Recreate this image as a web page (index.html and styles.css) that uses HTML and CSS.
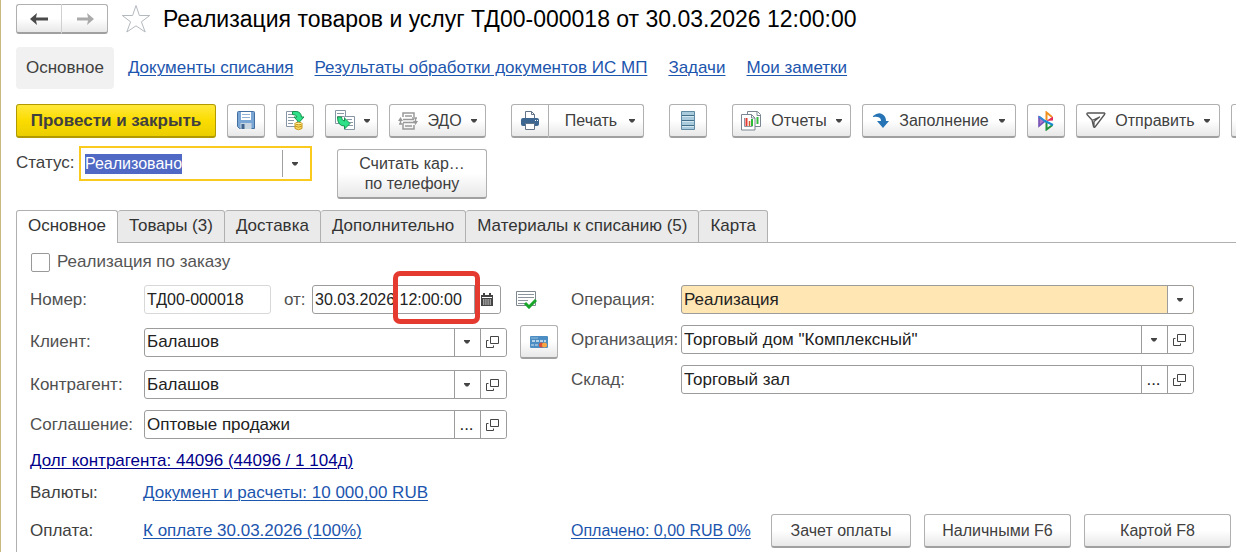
FILE: index.html
```html
<!DOCTYPE html>
<html lang="ru">
<head>
<meta charset="utf-8">
<title>Реализация товаров и услуг</title>
<link rel="stylesheet" href="styles.css">
</head>
<body>
<svg class="defs" aria-hidden="true">
  <symbol id="open" viewBox="0 0 13 12"><path d="M4.500.5h8v7h-8zM2.500 4.500h-2v7h7v-2" fill="none" stroke="#444"/></symbol>
  <symbol id="caret" viewBox="0 0 6 4"><path d="M0 0h6v1L4 3.500H2L0 1z" fill="#444"/></symbol>
</svg>
<main class="form">
  <header class="head">
    <div class="history">
      <button type="button" class="btn" aria-label="Назад"><svg width="18" height="14" viewBox="0 0 18 14"><path d="M0 7l7-6-1 4.500h12v3H6L7 13z" fill="#4a4a4a"/></svg></button>
      <button type="button" class="btn" aria-label="Вперед"><svg width="18" height="14" viewBox="0 0 18 14"><path d="M18 7l-7-6 1 4.500H1v3h11L11 13z" fill="#aaa"/></svg></button>
    </div>
    <svg class="star" width="30" height="30" viewBox="0 0 30 30"><path d="M15 1.500l3.400 10h10.300l-8.300 6.300 3.800 10.200-9.200-6.200L5.800 28l3.800-10.200-8.300-6.300h10.300z" fill="#fff" stroke="#b4b9be"/></svg>
    <h1>Реализация товаров и услуг ТД00-000018 от 30.03.2026 12:00:00</h1>
  </header>

  <nav class="nav">
    <span class="current">Основное</span>
    <a href="#">Документы списания</a>
    <a href="#">Результаты обработки документов ИС МП</a>
    <a href="#">Задачи</a>
    <a href="#">Мои заметки</a>
  </nav>

  <div class="toolbar">
    <button type="button" class="btn primary">Провести и закрыть</button>
    <button type="button" class="btn square" aria-label="Записать"><svg width="18" height="19" viewBox="0 0 18 19"><path d="M.5 1.500a1 1 0 0 1 1-1h15a1 1 0 0 1 1 1v16h-15l-2-2z" fill="#7aa6d6" stroke="#456f9f"/><path d="M4 1h10v8H4z" fill="#fff"/><path d="M5 3.500h8M5 6.500h8" stroke="#8fb2d6"/><path d="M3.500 12h11v6h-11z" fill="#c9d5e0"/><path d="M4.500 13h3v5h-3z" fill="#3f648f"/></svg></button>
    <button type="button" class="btn square" aria-label="Провести"><svg width="20" height="21" viewBox="0 0 20 21"><path d="M1.500 1.500h11v15h-11z" fill="#fff" stroke="#8796a6"/><path d="M3 4.500h6M3 7.500h6M3 10.500h6M3 13.500h5" stroke="#8b98a6"/><path d="M7.500 1.500h4q4.500.5 5 5.500h2.500l-5 5.500-5-5.500h3q-.5-2.500-4.500-2.500z" fill="#2ee088" stroke="#14934c"/><path d="M10 13.500v5q3.500 2.500 7 0v-5z" fill="#fad75e" stroke="#c79a20"/><ellipse cx="13.500" cy="13.500" rx="3.500" ry="1.200" fill="#fff0a0" stroke="#c79a20"/><path d="M10 16q3.500 2.300 7 0" fill="none" stroke="#c79a20"/></svg></button>
    <button type="button" class="btn split" aria-label="Создать на основании"><svg width="21" height="21" viewBox="0 0 21 21"><path d="M1.500.5h10v13h-10z" fill="#fff" stroke="#8796a6"/><path d="M3 3.500h7M3 6.500h7" stroke="#8b98a6"/><path d="M10.500 6.500h10v13h-10z" fill="#fff" stroke="#8796a6"/><path d="M13 9.500h5M15 12.500h4M14 15.500h5" stroke="#8b98a6"/><path d="M3.500 7h4q0 3.500 3 4V8l5.500 5.500-5.500 5.500v-3q-7 0-7-9z" fill="#2ee088" stroke="#14934c"/></svg><svg class="caret"><use href="#caret"/></svg></button>
    <button type="button" class="btn edo"><svg width="20" height="20" viewBox="0 0 20 20"><g fill="none" stroke="#999" stroke-width="1.500"><path d="M5 6V2h11v4M5 14v4h11v-4M5 8.500h11M5 11.500h11M7 5h7M7 15h7"/><path d="M1 13h5M2.500 13V8M14 7h5M17.500 7v5"/></g><path d="M0 10l2.500-4L5 10zM15 10h5l-2.500 4z" fill="#999"/></svg><span>ЭДО</span><svg class="caret"><use href="#caret"/></svg></button>
    <div class="joined">
      <button type="button" class="btn square" aria-label="Печать сразу"><svg width="18" height="19" viewBox="0 0 18 19"><path d="M4.500 8V.5h6l3 3V8" fill="#fff" stroke="#61748a"/><path d="M10.500.5v3h3" fill="none" stroke="#61748a"/><rect y="7" width="18" height="8" rx="2" fill="#3d6791"/><path d="M14 9.500h1M16 9.500h1" stroke="#fff"/><path d="M4.500 12.500h9v6h-9z" fill="#fff" stroke="#61748a"/></svg></button>
      <button type="button" class="btn print"><span>Печать</span><svg class="caret"><use href="#caret"/></svg></button>
    </div>
    <button type="button" class="btn square apart" aria-label="Список"><svg width="14" height="19" viewBox="0 0 14 19"><path d="M.5.5h13v18H.5z" fill="#a9cbdc" stroke="#5f8ba4"/><path d="M1 4.500h12M1 9.500h12M1 14.500h12" stroke="#416e89"/><path d="M1 5.500h12M1 10.500h12M1 15.500h12" stroke="#d5e8f1"/></svg></button>
    <button type="button" class="btn reports apart"><svg width="21" height="20" viewBox="0 0 21 20"><path d="M6.500.5h10l3 3v12h-13z" fill="#fff" stroke="#7a8792"/><path d="M16 1v3.500h3.500" fill="none" stroke="#7a8792"/><path d="M16.500 6v7" stroke="#35bb41" stroke-width="2"/><path d="M.5 3.500h10l3.500 3.500v12H.5z" fill="#fff" stroke="#7a8792"/><path d="M10.500 3.500V7H14" fill="none" stroke="#7a8792"/><path d="M3.500 7v8.500h8" fill="none" stroke="#8c98a1"/><path d="M5.500 7v8" stroke="#e43b35" stroke-width="2"/><path d="M8.500 10v5" stroke="#cf5a2d" stroke-width="1.500"/><path d="M11 8v7" stroke="#2cba39" stroke-width="2"/></svg><span>Отчеты</span><svg class="caret"><use href="#caret"/></svg></button>
    <button type="button" class="btn fill"><svg width="16" height="15" viewBox="0 0 16 15"><path d="M0 3Q5-1 9 1q4 2 4 7h3l-6 7-6-7h4Q8 3 0 4z" fill="#2674b5"/></svg><span>Заполнение</span><svg class="caret"><use href="#caret"/></svg></button>
    <button type="button" class="btn square" aria-label="Сервисы"><svg width="16" height="20" viewBox="0 0 16 20"><path d="M1 6v9l6-5z" fill="#b07acb" stroke="#7552b5" stroke-width="1.600"/><path d="M1 5.500l6.500 5" stroke="#2d8cd8" stroke-width="2"/><path d="M8.500 9V1.500L14 6" fill="none" stroke="#f09023" stroke-width="2"/><path d="M8 10l7-4.500v4z" fill="#e42c58"/><path d="M8.500 11v7.500l6-4.500" fill="none" stroke="#24913d" stroke-width="2"/><path d="M7 10l8 4" stroke="#168bd2" stroke-width="2"/></svg></button>
    <button type="button" class="btn send"><svg width="20" height="17" viewBox="0 0 20 17"><path d="M2 1h16q1.500 0 .5 1.500L9 15q-1 1-1.500-.5L6 8 1 2.500Q.5 1 2 1zM6 8.500L13.500 5 8 9.500v5" fill="none" stroke="#555" stroke-width="1.300" stroke-linejoin="round"/></svg><span>Отправить</span><svg class="caret"><use href="#caret"/></svg></button>
    <button type="button" class="btn square" aria-label="Еще"></button>
  </div>

  <div class="status">
    <label for="status">Статус:</label>
    <div class="statusbox">
      <input id="status" value="Реализовано" size="10">
      <button type="button" aria-label="Выбрать"><svg class="caret"><use href="#caret"/></svg></button>
    </div>
    <button type="button" class="btn card">Считать кар…<br>по телефону</button>
  </div>

  <div class="tabs" role="tablist">
    <button type="button" role="tab" aria-selected="true" class="tab active">Основное</button>
    <button type="button" role="tab" class="tab">Товары (3)</button>
    <button type="button" role="tab" class="tab">Доставка</button>
    <button type="button" role="tab" class="tab">Дополнительно</button>
    <button type="button" role="tab" class="tab">Материалы к списанию (5)</button>
    <button type="button" role="tab" class="tab">Карта</button>
  </div>

  <section class="panel">
    <label class="check"><input type="checkbox">Реализация по заказу</label>
    <div class="columns">
      <div class="left">
        <div class="row">
          <label for="number">Номер:</label>
          <div class="field muted"><input id="number" value="ТД00-000018"></div>
          <label for="date" class="from">от:</label>
          <div class="field date"><input id="date" value="30.03.2026 12:00:00">
            <button type="button" aria-label="Календарь"><svg width="12" height="13" viewBox="0 0 12 13"><path d="M0 2h12v11H0z" fill="#444"/><path d="M3 0v3M9 0v3" stroke="#444" stroke-width="2"/><path d="M1 4.500h10" stroke="#fff"/><path d="M2 7h8M2 9h8M2 11h8" stroke="#fff" stroke-width="1.200" stroke-dasharray="1.400 .8"/></svg></button>
            <span class="mark"></span>
          </div>
          <svg class="posted" width="21" height="18" viewBox="0 0 21 18"><path d="M.5.5h19v14H.5z" fill="#fff" stroke="#7d8790"/><path d="M2 3.500h16M2 6.500h16M2 9.500h10M2 12.500h8" stroke="#8b949c"/><path d="M9 12l4 4 7-7" fill="none" stroke="#18a52a" stroke-width="3"/></svg>
        </div>
        <div class="row client">
          <label for="client">Клиент:</label>
          <div class="field wide"><input id="client" value="Балашов"><button type="button" aria-label="Выбрать"><svg class="caret"><use href="#caret"/></svg></button><button type="button" aria-label="Открыть"><svg class="open"><use href="#open"/></svg></button></div>
          <button type="button" class="btn square bankcard" aria-label="Карта"><svg width="18" height="12" viewBox="0 0 18 12"><rect width="18" height="12" rx="1" fill="#4c8ec3"/><path d="M1 2h7" stroke="#91bddf"/><path d="M2 5h14" stroke="#dcebf5" stroke-width="1.500" stroke-dasharray="3 1"/><path d="M1 9h7" stroke="#d6e5ef" stroke-dasharray="3 1"/><circle cx="11.500" cy="9" r="2.500" fill="#df4f36"/><circle cx="14.500" cy="9" r="2.500" fill="#f6a642"/></svg></button>
        </div>
        <div class="row">
          <label for="partner">Контрагент:</label>
          <div class="field wide"><input id="partner" value="Балашов"><button type="button" aria-label="Выбрать"><svg class="caret"><use href="#caret"/></svg></button><button type="button" aria-label="Открыть"><svg class="open"><use href="#open"/></svg></button></div>
        </div>
        <div class="row">
          <label for="deal">Соглашение:</label>
          <div class="field wide"><input id="deal" value="Оптовые продажи"><button type="button">...</button><button type="button" aria-label="Открыть"><svg class="open"><use href="#open"/></svg></button></div>
        </div>
      </div>
      <div class="right">
        <div class="row">
          <label for="operation">Операция:</label>
          <div class="field accent"><input id="operation" value="Реализация"><button type="button" aria-label="Выбрать"><svg class="caret"><use href="#caret"/></svg></button></div>
        </div>
        <div class="row">
          <label for="company">Организация:</label>
          <div class="field"><input id="company" value='Торговый дом "Комплексный"'><button type="button" aria-label="Выбрать"><svg class="caret"><use href="#caret"/></svg></button><button type="button" aria-label="Открыть"><svg class="open"><use href="#open"/></svg></button></div>
        </div>
        <div class="row">
          <label for="store">Склад:</label>
          <div class="field"><input id="store" value="Торговый зал"><button type="button">...</button><button type="button" aria-label="Открыть"><svg class="open"><use href="#open"/></svg></button></div>
        </div>
      </div>
    </div>
    <div class="debt"><a href="#">Долг контрагента: 44096 (44096 / 1 104д)</a></div>
    <div class="line currency"><span>Валюты:</span><a href="#">Документ и расчеты: 10 000,00 RUB</a></div>
    <div class="line payment">
      <span>Оплата:</span>
      <div><a href="#">К оплате 30.03.2026 (100%)</a></div>
      <div class="paid">
        <a href="#">Оплачено: 0,00 RUB 0%</a>
        <button type="button" class="btn offset">Зачет оплаты</button>
        <button type="button" class="btn">Наличными F6</button>
        <button type="button" class="btn">Картой F8</button>
      </div>
    </div>
  </section>
</main>
<script src="main.js"></script>
</body>
</html>
```
FILE: main.js
```js
// The status field opens focused with its value selected.
document.getElementById("status").focus();
document.getElementById("status").select();
```
FILE: styles.css
```css
* { box-sizing: border-box; }
body {
  margin: 0;
  background: #fff;
  color: #404040;
  font: 17px/20px "Liberation Sans", Arial, sans-serif;
  overflow: hidden;
}
button, input { font: inherit; color: inherit; margin: 0; }
button { white-space: nowrap; }
a { color: #1c55ae; text-decoration-thickness: 1px; text-underline-offset: 2px; white-space: nowrap; }
.defs { position: absolute; width: 0; height: 0; }
.form {
  min-height: 100vh;
  padding: 4px 0 0 15px;
  border-left: 1px solid #c8b97f;
}
.btn {
  display: flex;
  align-items: center;
  justify-content: center;
  flex: none;
  padding: 0;
  border: 1px solid #b0b0b0;
  border-bottom: 2px solid #a0a0a0;
  border-radius: 3px;
  background: linear-gradient(#fff 50%, #e8e8e8);
  font-size: 16px;
}
.caret { width: 6px; height: 4px; flex: none; }
.open { width: 13px; height: 12px; display: block; }

.head { display: flex; align-items: center; height: 30px; }
.history { display: flex; }
.history .btn { width: 46px; height: 30px; }
.history .btn:first-child { border-radius: 3px 0 0 3px; border-right-color: #d0d0d0; }
.history .btn:last-child { border-radius: 0 3px 3px 0; border-left: 0; }
.star { margin: 0 12px 0 13px; }
h1 { margin: 0; font-size: 23px; line-height: 30px; font-weight: 400; color: #000; white-space: nowrap; }

.nav { display: flex; align-items: center; gap: 21px; margin-top: 13px; }
.current { padding: 11px 10px; margin-right: -7px; border-radius: 4px; background: #f1f1f1; }

.toolbar { display: flex; gap: 11px; margin-top: 15px; overflow: hidden; }
.toolbar .btn { height: 34px; }
.toolbar .primary {
  width: 200px;
  font-size: 17px;
  font-weight: 700;
  border-color: #b09a00;
  background: linear-gradient(#ffe83c, #fbdc00 50%, #ebce00);
}
.btn.square { width: 38px; }
.split { width: 53px; gap: 9px; }
.edo { width: 97px; gap: 9px; }
.joined { display: flex; margin-left: 14px; }
.joined .square { border-radius: 3px 0 0 3px; }
.joined .print { width: 95px; gap: 12px; padding-left: 8px; border-left: 0; border-radius: 0 3px 3px 0; }
.apart { margin-left: 14px; }
.reports { width: 119px; gap: 9px; }
.fill { width: 154px; gap: 10px; }
.send { width: 144px; gap: 9px; }

.status { display: flex; align-items: flex-start; height: 64px; padding-top: 8px; }
.status label { padding-top: 7px; width: 63px; }
.statusbox { display: flex; width: 233px; height: 35px; border: 2px solid #facb1e; padding: 2px 0; }
.statusbox input { flex: 1; min-width: 0; border: 0; padding: 0 4px; outline: 0; font-size: 16px; }
.statusbox input::selection { background: #5069c5; color: #fff; }
.statusbox button { width: 28px; border: 0; border-left: 1px solid #a0a0a0; background: none; padding: 0 4px 0 0; display: flex; align-items: center; justify-content: center; }
.btn.card { display: block; width: 150px; height: 50px; margin: 3px 0 0 25px; text-align: center; }

.tabs { display: flex; margin-top: 8px; background: linear-gradient(#b0b0b0, #b0b0b0) bottom / 100% 1px no-repeat; }
.tab {
  height: 33px;
  padding: 0 11px 2px;
  border: 1px solid #b0b0b0;
  border-left: 0;
  border-radius: 3px 3px 0 0;
  background: #eaeaea;
  color: #333;
}
.tab.active { border-left: 1px solid #b0b0b0; border-bottom: 0; background: #fff; }
.panel { border-left: 1px solid #b0b0b0; padding: 9px 5px 20px 13px; }
.check { display: flex; align-items: center; gap: 7px; color: #555; }
.check input { appearance: none; width: 19px; height: 19px; margin: 0 0 0 1px; border: 1px solid #999; border-radius: 2px; background: #fff; }

.columns { display: grid; grid-template-columns: 541px 1fr; padding-right: 37px; margin-top: 13px; }
.left, .right { display: flex; flex-direction: column; gap: 11px; }
.row { display: flex; align-items: center; min-height: 29px; }
.row label { flex: none; width: 114px; color: #505050; }
.right .row label { width: 110px; }
.field { display: flex; position: relative; flex: 1; height: 29px; border: 1px solid #9c9c9c; border-radius: 3px; background: #fff; color: #222; }
.field input { flex: 1; min-width: 0; width: 0; padding: 0 2px; border: 0; background: none; outline: 0; }
.field button { display: flex; align-items: center; justify-content: center; width: 26px; padding: 0 2px 0 0; border: 0; border-left: 1px solid #9c9c9c; background: #fff; }
.field button:last-of-type { border-radius: 0 3px 3px 0; }
.wide { flex: none; width: 363px; }
.muted { flex: none; width: 127px; border-color: #d8d8d8; }
.muted input, .date input { font-size: 16px; }
.row .from { width: 41px; padding-left: 13px; }
.field.date { flex: none; width: 189px; }
.mark { position: absolute; left: 80px; top: -15px; width: 87px; height: 53px; border: 5px solid #e53a30; border-radius: 7px; }
.posted { margin-left: 15px; }
.accent { background: #ffe6b3; }
.client { min-height: 34px; }
.bankcard { height: 34px; margin-left: 13px; }

.debt { margin-top: 12px; }
.debt a { color: #00008b; }
.line { display: grid; grid-template-columns: 113px 428px 1fr; align-items: center; }
.currency { margin-top: 12px; }
.payment { margin-top: 11px; }
.paid { display: flex; align-items: center; gap: 13px; }
.paid a { width: 185px; font-size: 16px; }
.paid .btn { width: 147px; height: 34px; }
.paid .btn.offset { width: 140px; margin-left: 2px; }
```
